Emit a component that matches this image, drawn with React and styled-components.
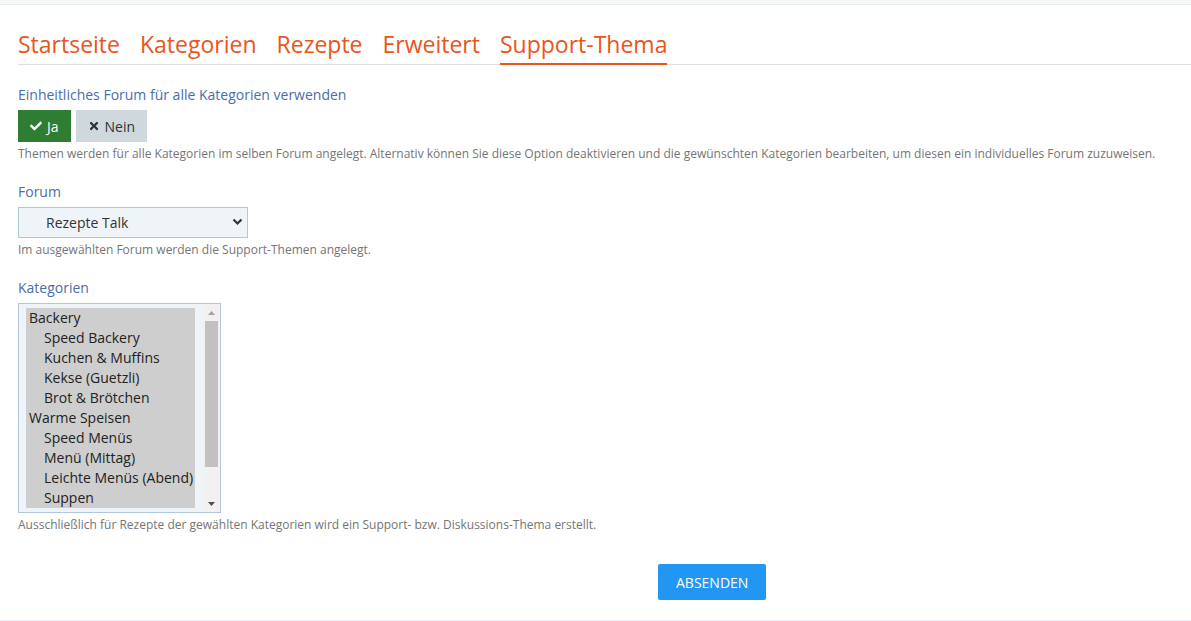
import styled, { createGlobalStyle } from 'styled-components';
import { useState } from 'react';
import { FaCheck, FaTimes } from 'react-icons/fa';

const GlobalStyle = createGlobalStyle`
  html, body {
    margin: 0;
    padding: 0;
    background: #fff;
    font-family: "Open Sans", "Liberation Sans", sans-serif;
    color: #333;
  }
`;

const Page = styled.div`
  border-top: 4px solid #f7f8fa;
  border-bottom: 1px solid #e6eef6;
  min-height: 621px;
  box-sizing: border-box;
`;

const TopRule = styled.div`
  height: 1px;
  background: #e6ebf0;
`;

const Content = styled.div`
  padding: 23px 0 19px 18px;
`;

const Tabs = styled.nav`
  display: flex;
  gap: 20px;
  border-bottom: 1px solid #dedede;
`;

const Tab = styled.a`
  font-size: 23px;
  line-height: 32px;
  color: #e8561c;
  text-decoration: none;
  padding-bottom: 3px;
  margin-bottom: -1px;
  border-bottom: 2px solid ${p => (p.$active ? '#e8561c' : 'transparent')};
  cursor: pointer;
`;

const Field = styled.div`
  margin-top: ${p => p.$top || 20}px;
  padding-right: 18px;
`;

const Label = styled.div`
  font-size: 14px;
  line-height: 20px;
  color: #4a6ea8;
  margin-bottom: 5px;
`;

const Help = styled.div`
  font-size: 12px;
  line-height: 16px;
  color: #757575;
  margin-top: 4px;
`;

const Toggle = styled.div`
  display: flex;
  gap: 5px;
`;

const ToggleButton = styled.button`
  display: flex;
  align-items: center;
  gap: 5px;
  height: 32px;
  padding: 0 12px;
  border: none;
  border-radius: 0;
  font-family: inherit;
  font-size: 14px;
  background: ${p => (p.$on ? '#2e7d32' : '#cfd8dc')};
  color: ${p => (p.$on ? '#fff' : '#333')};
  cursor: pointer;

  svg {
    font-size: 12px;
  }
`;

const SelectWrap = styled.div`
  position: relative;
  width: 230px;
`;

const Select = styled.select`
  appearance: none;
  width: 100%;
  height: 31px;
  padding: 0 28px 0 27px;
  border: 1px solid #afc6dd;
  border-radius: 0;
  background: #eff4f9;
  font-family: inherit;
  font-size: 14px;
  color: #333;
  outline: none;
`;

const Chevron = styled.svg`
  position: absolute;
  right: 5px;
  top: 11px;
  pointer-events: none;
`;

const ListBox = styled.div`
  display: flex;
  width: 203px;
  height: 210px;
  box-sizing: border-box;
  border: 1px solid #afc6dd;
  background: #eff4f9;
`;

const OptionList = styled.div`
  flex: 1;
  padding: 4px 8px 4px 7px;
`;

const Option = styled.div`
  font-size: 14px;
  line-height: 20px;
  height: 20px;
  padding-left: ${p => (p.$sub ? 18 : 3)}px;
  background: ${p => (p.$selected ? '#cecece' : 'transparent')};
  color: #222;
  white-space: nowrap;
  cursor: default;
`;

const Scrollbar = styled.div`
  width: 17px;
  display: flex;
  flex-direction: column;
  background: #f1f1f1;
`;

const ScrollArrow = styled.div`
  height: 17px;
  display: flex;
  align-items: center;
  justify-content: center;
`;

const ScrollTrack = styled.div`
  flex: 1;
  padding: 0 2px;
`;

const ScrollThumb = styled.div`
  height: 146px;
  background: #c1c1c1;
`;

const Footer = styled.div`
  margin-top: 31px;
  padding-left: 640px;
`;

const Submit = styled.button`
  height: 36px;
  padding: 0 18px;
  border: none;
  border-radius: 2px;
  background: #2196f3;
  color: #fff;
  font-family: inherit;
  font-size: 14px;
  text-transform: uppercase;
  cursor: pointer;
`;

const tabs = ['Startseite', 'Kategorien', 'Rezepte', 'Erweitert', 'Support-Thema'];

// only the rows visible in the list's viewport
const categories = [
  { name: 'Backery' },
  { name: 'Speed Backery', sub: true },
  { name: 'Kuchen & Muffins', sub: true },
  { name: 'Kekse (Guetzli)', sub: true },
  { name: 'Brot & Brötchen', sub: true },
  { name: 'Warme Speisen' },
  { name: 'Speed Menüs', sub: true },
  { name: 'Menü (Mittag)', sub: true },
  { name: 'Leichte Menüs (Abend)', sub: true },
  { name: 'Suppen', sub: true },
];

export default function App() {
  const [unified, setUnified] = useState(true);
  const [selected, setSelected] = useState(categories.map(c => c.name));

  const toggleCategory = name => {
    setSelected(s => (s.includes(name) ? s.filter(n => n !== name) : [...s, name]));
  };

  return (
    <>
      <GlobalStyle />
      <Page>
        <TopRule />
        <Content>
          <Tabs>
            {tabs.map(t => (
              <Tab key={t} $active={t === 'Support-Thema'}>{t}</Tab>
            ))}
          </Tabs>

          <Field $top={20}>
            <Label>Einheitliches Forum für alle Kategorien verwenden</Label>
            <Toggle>
              <ToggleButton $on={unified} onClick={() => setUnified(true)}>
                <FaCheck /> Ja
              </ToggleButton>
              <ToggleButton $on={false} onClick={() => setUnified(false)}>
                <FaTimes /> Nein
              </ToggleButton>
            </Toggle>
            <Help>
              Themen werden für alle Kategorien im selben Forum angelegt. Alternativ können Sie diese Option deaktivieren und die gewünschten Kategorien bearbeiten, um diesen ein individuelles Forum zuzuweisen.
            </Help>
          </Field>

          <Field $top={20}>
            <Label>Forum</Label>
            <SelectWrap>
              <Select defaultValue="talk">
                <option value="talk">Rezepte Talk</option>
              </Select>
              <Chevron width="11" height="8" viewBox="0 0 11 8">
                <path d="M1.5 1.5 L5.5 5.5 L9.5 1.5" fill="none" stroke="#333" strokeWidth="2.2" />
              </Chevron>
            </SelectWrap>
            <Help>Im ausgewählten Forum werden die Support-Themen angelegt.</Help>
          </Field>

          <Field $top={20}>
            <Label>Kategorien</Label>
            <ListBox role="listbox" aria-multiselectable="true">
              <OptionList>
                {categories.map(c => (
                  <Option
                    key={c.name}
                    role="option"
                    $sub={c.sub}
                    $selected={selected.includes(c.name)}
                    onClick={() => toggleCategory(c.name)}
                  >
                    {c.name}
                  </Option>
                ))}
              </OptionList>
              <Scrollbar>
                <ScrollArrow>
                  <svg width="7" height="4" viewBox="0 0 7 4"><path d="M0 4 L3.5 0 L7 4 Z" fill="#a3a3a3" /></svg>
                </ScrollArrow>
                <ScrollTrack>
                  <ScrollThumb />
                </ScrollTrack>
                <ScrollArrow>
                  <svg width="7" height="4" viewBox="0 0 7 4"><path d="M0 0 L3.5 4 L7 0 Z" fill="#505050" /></svg>
                </ScrollArrow>
              </Scrollbar>
            </ListBox>
            <Help>Ausschließlich für Rezepte der gewählten Kategorien wird ein Support- bzw. Diskussions-Thema erstellt.</Help>
          </Field>

          <Footer>
            <Submit>Absenden</Submit>
          </Footer>
        </Content>
      </Page>
    </>
  );
}
